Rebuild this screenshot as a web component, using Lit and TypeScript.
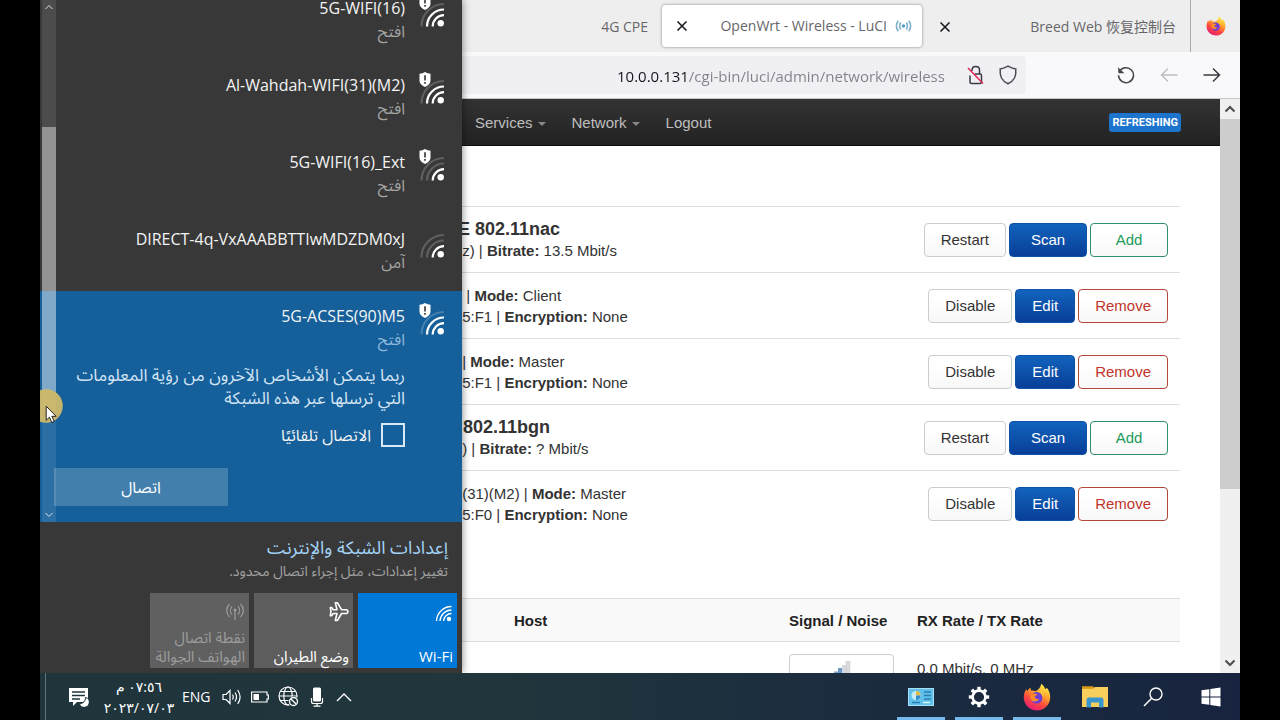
import { LitElement, html, css, svg, nothing } from "lit";
import { customElement, property } from "lit/decorators.js";
import { classMap } from "lit/directives/class-map.js";

interface Network {
  name: string;
  status: string;
  bars: number;
  open: boolean;
}

const networks: Network[] = [
  { name: "5G-WIFI(16)", status: "افتح", bars: 3, open: true },
  { name: "Al-Wahdah-WIFI(31)(M2)", status: "افتح", bars: 3, open: true },
  { name: "5G-WIFI(16)_Ext", status: "افتح", bars: 2, open: true },
  { name: "DIRECT-4q-VxAAABBTTIwMDZDM0xJ", status: "آمن", bars: 2, open: false },
];

const current: Network = { name: "5G-ACSES(90)M5", status: "افتح", bars: 3, open: true };

const firefoxLogo = (size: number) => html`
  <svg width=${size} height=${size} viewBox="0 0 28 28" aria-hidden="true">
    <defs>
      <linearGradient id="ff-body" x1="0.8" y1="0.05" x2="0.3" y2="1">
        <stop offset="0" stop-color="#fff04a" />
        <stop offset="0.35" stop-color="#ffa32c" />
        <stop offset="0.65" stop-color="#ff4a3d" />
        <stop offset="1" stop-color="#e31a77" />
      </linearGradient>
    </defs>
    <path
      fill="url(#ff-body)"
      d="M18.2 0.8c2.2 1.4 3.4 3.5 3.8 5 .8.3 1.600-.3 1.800-1 1.900 2.200 3.400 5.300 3.400 9.400C27.200 21.600 21.400 27.400 14 27.400S.8 21.700.8 14.400c0-3.600 1-6.300 2.600-8.400.2 1 .5 1.700 1 2.200C5 6.700 6.300 5.300 7.700 4.700c-.2 1-.1 2 .3 2.900 1.300-.4 3.300-.2 4.800.6 2.700-1.500 5-4 5.400-7.400z"
    />
    <circle cx="13.600" cy="14.800" r="5.800" fill="#6b3fd6" />
    <path d="M8 11.500c2.500-1.600 5.200-1 6.800.6-1.500.2-2.900 1-3 2-.1 1.500 2 2.300 4.300 1.600-1 3-5.600 3.700-7.800 1.200-1.600-1.800-1.300-4-.3-5.400z" fill="#ff8a2a" />
    <path d="M14.500 9c3-.6 5.600 1.800 5.500 5.400 1.400-2.600.8-6-1.400-8-1.200 1.300-2.700 2-4.100 2.600z" fill="#ffc83a" />
  </svg>
`;

const closeIcon = html`
  <svg width="12" height="12" viewBox="0 0 12 12" aria-hidden="true">
    <path d="M1.500 1.500l9 9M10.500 1.500l-9 9" stroke="#15141a" stroke-width="1.500" fill="none" />
  </svg>
`;

@customElement("signal-icon")
export class SignalIcon extends LitElement {
  @property({ type: Number }) bars = 3;
  @property({ type: Boolean }) open = false;

  static styles = css`
    :host { display: block; width: 26px; height: 32px; color: #fff; }
    svg { display: block; }
    .dim { opacity: 0.2; }
  `;

  render() {
    const arcs = [
      { level: 2, d: "M13.700 31.500A11.300 11.300 0 0 1 25 20.200" },
      { level: 3, d: "M8 31.500A17 17 0 0 1 25 14.500" },
      { level: 4, d: "M2.500 31.500A22.500 22.500 0 0 1 25 9" },
    ];
    return html`
      <svg width="26" height="32" viewBox="0 0 26 32" aria-hidden="true">
        ${arcs.map(
          (a) => svg`<path class=${classMap({ dim: a.level > this.bars })} d=${a.d}
            fill="none" stroke="currentColor" stroke-width="2.200" />`,
        )}
        <circle cx="21.700" cy="28.300" r="3.200" fill="currentColor" />
        ${this.open
          ? svg`<path d="M0.500 1.800Q3.500 1.600 6 0Q8.500 1.600 11.500 1.800V9Q11.200 12.500 6 15Q0.800 12.500 0.500 9Z" fill="currentColor" />
              <path d="M6 3.200V8.400M6 10V11.700" stroke="#333" stroke-width="1.600" />`
          : nothing}
      </svg>
    `;
  }
}

@customElement("wifi-flyout")
export class WifiFlyout extends LitElement {
  static styles = css`
    :host {
      display: flex;
      flex-direction: column;
      position: relative;
      z-index: 1;
      width: 422px;
      flex: none;
      background: #383838;
      color: #f4f4f4;
      font: 16px/23px "Open Sans", "Noto Sans Arabic", "DejaVu Sans", sans-serif;
      box-shadow: 0 0 8px rgba(0, 0, 0, 0.5);
      direction: rtl;
      box-sizing: border-box;
    }
    .list {
      flex: 1;
      min-height: 0;
      margin: 0;
      padding: 0;
      list-style: none;
      overflow: hidden;
      display: flex;
      flex-direction: column;
      justify-content: flex-end;
    }
    .item {
      flex: none;
      display: flex;
      gap: 14px;
      padding: 12px 17px 17px 14px;
    }
    .info { flex: 1; min-width: 0; padding-top: 2px; }
    .name { display: block; direction: ltr; text-align: right; }
    .status { display: block; color: #a4a4a4; }
    .selected { background: #155f9b; padding-bottom: 16px; }
    .selected .status { color: #8fb9dc; }
    .warning { margin: 12px 0 14px; color: #d3e4f3; font-size: 17px; white-space: nowrap; }
    .auto { display: flex; align-items: center; gap: 10px; }
    .box {
      appearance: none;
      width: 24px;
      height: 24px;
      margin: 0;
      border: 2px solid #d8e8f5;
    }
    .connect {
      display: block;
      width: 174px;
      height: 38px;
      margin: 21px auto 0 0;
      border: 0;
      background: #437fad;
      color: #fff;
      font: inherit;
    }
    .footer { padding: 13px 5px 5px; }
    .settings {
      display: block;
      padding: 0 9px;
      color: #a3d3f7;
      text-decoration: none;
      font-size: 18px;
      line-height: 24px;
    }
    .hint { margin: 0 0 11px; padding: 0 9px; color: #a2a2a2; font-size: 14px; }
    .tiles { display: flex; gap: 5px; }
    .tile {
      width: 99px;
      height: 75px;
      padding: 4px 4px 2px;
      border: 0;
      display: flex;
      flex-direction: column;
      justify-content: space-between;
      align-items: flex-start;
      background: #5d5d5d;
      color: #fff;
      font: inherit;
      font-size: 15px;
      line-height: 19px;
      text-align: right;
      white-space: nowrap;
    }
    .tile.on { background: #0078d7; }
    .tile.off { color: #9c9c9c; background: #606060; }
    .track {
      position: absolute;
      top: 0;
      left: 2px;
      width: 14px;
      height: 522px;
      background: rgba(255, 255, 255, 0.1);
      display: flex;
      flex-direction: column;
      align-items: center;
      justify-content: space-between;
      padding: 4px 0;
      box-sizing: border-box;
    }
    .thumb {
      position: absolute;
      top: 127px;
      left: 0;
      width: 14px;
      height: 284px;
      background: rgba(255, 255, 255, 0.4);
    }
    .pointer { position: absolute; left: 0; top: 388px; }
  `;

  private details(n: Network) {
    return html`
      <span class="name">${n.name}</span>
      <span class="status">${n.status}</span>
    `;
  }

  render() {
    return html`
      <ul class="list">
        ${networks.map(
          (n) => html`
            <li class="item">
              <signal-icon .bars=${n.bars} .open=${n.open}></signal-icon>
              <div class="info">${this.details(n)}</div>
            </li>
          `,
        )}
        <li class="item selected">
          <signal-icon .bars=${current.bars} .open=${current.open}></signal-icon>
          <div class="info">
            ${this.details(current)}
            <p class="warning">
              ربما يتمكن الأشخاص الآخرون من رؤية المعلومات<br />التي ترسلها عبر هذه الشبكة
            </p>
            <label class="auto"><input class="box" type="checkbox" />الاتصال تلقائيًا</label>
            <button class="connect" type="button">اتصال</button>
          </div>
        </li>
      </ul>
      <div class="footer">
        <a class="settings" href="#settings">إعدادات الشبكة والإنترنت</a>
        <p class="hint">تغيير إعدادات، مثل إجراء اتصال محدود.</p>
        <div class="tiles">
          <button class="tile on" type="button">
            <svg width="18" height="26" viewBox="0 0 18 26" aria-hidden="true">
              <g fill="none" stroke="#fff" stroke-width="1.300">
                <path d="M1.500 24A15 15 0 0 1 16.500 9.500" />
                <path d="M5 24A11.500 11.500 0 0 1 16.500 13" />
                <path d="M8.500 24A8 8 0 0 1 16.500 16.500" />
              </g>
              <circle cx="14" cy="22" r="2.200" fill="#fff" />
            </svg>
            <span>Wi-Fi</span>
          </button>
          <button class="tile" type="button">
            <svg width="20" height="26" viewBox="0 0 20 26" aria-hidden="true">
              <path
                fill="none"
                stroke="#fff"
                stroke-width="1.600"
                stroke-linejoin="round"
                d="M17.500 12.700H12.500L8.500 5.800H6.300L8 12.700H4.300L2.800 10.600H1.300L2 14.600L1.300 18.600H2.800L4.300 16.500H8L6.300 23.400H8.500L12.500 16.500H17.500Q19 16 19 14.600Q19 13.200 17.500 12.700Z"
              />
            </svg>
            <span>وضع الطيران</span>
          </button>
          <button class="tile off" type="button">
            <svg width="20" height="24" viewBox="0 0 20 24" aria-hidden="true">
              <g fill="none" stroke="currentColor" stroke-width="1.200">
                <path d="M4.500 7a9 9 0 0 0 0 13M7 9.500a6 6 0 0 0 0 8M15.500 7a9 9 0 0 1 0 13M13 9.500a6 6 0 0 1 0 8M10 13.500V23" />
              </g>
              <circle cx="10" cy="13" r="1.500" fill="currentColor" />
            </svg>
            <span>نقطة اتصال<br />الهواتف الجوالة</span>
          </button>
        </div>
      </div>
      <div class="track">
        <svg width="8" height="6" viewBox="0 0 8 6"><path d="M0.500 5L4 1.500L7.500 5" fill="none" stroke="#ddd" /></svg>
        <svg width="8" height="6" viewBox="0 0 8 6"><path d="M0.500 1L4 4.500L7.500 1" fill="none" stroke="#ddd" /></svg>
        <div class="thumb"></div>
      </div>
      <svg class="pointer" width="24" height="36" viewBox="0 0 24 36" aria-hidden="true">
        <circle cx="6" cy="18" r="16.800" fill="#cdb86a" fill-opacity="0.950" />
        <path d="M6.200 18.200V32.300L9.400 29.200L11.800 34.500L14.200 33.500L11.900 28.300H16.200Z" fill="#fff" stroke="#111" stroke-width="0.900" />
      </svg>
    `;
  }
}

interface Entry {
  title?: string;
  lines: [string, string, string][];
}

// Long interface descriptions run on under the flyout at their left end.
const entries: Entry[] = [
  { title: "E 802.11nac", lines: [[" z) | ", "Bitrate:", " 13.5 Mbit/s"]] },
  { lines: [["  | ", "Mode:", " Client"], [":5:F1 | ", "Encryption:", " None"]] },
  { lines: [[" | ", "Mode:", " Master"], [":5:F1 | ", "Encryption:", " None"]] },
  { title: " 802.11bgn", lines: [[" ) | ", "Bitrate:", " ? Mbit/s"]] },
  { lines: [[" (31)(M2) | ", "Mode:", " Master"], [":5:F0 | ", "Encryption:", " None"]] },
];

@customElement("browser-window")
export class BrowserWindow extends LitElement {
  static styles = css`
    :host {
      flex: 1;
      min-width: 0;
      display: flex;
      flex-direction: column;
      background: #fff;
      font: 14px/20px "Open Sans", "Noto Sans CJK SC", sans-serif;
      color: #66666a;
    }
    svg { display: block; flex: none; }
    button { font: inherit; color: inherit; }
    .icon { border: 0; padding: 0; background: none; display: block; }
    .tabs {
      display: flex;
      justify-content: flex-end;
      align-items: stretch;
      height: 52px;
      flex: none;
      background: #eeeeee;
      white-space: nowrap;
    }
    .tab { display: flex; align-items: center; padding: 2px 14px 0; }
    .active {
      width: 260px;
      box-sizing: border-box;
      margin: 5px 0;
      padding: 0 10px 0 14px;
      background: #fff;
      border-radius: 4px;
      box-shadow: 0 0 3px rgba(0, 0, 0, 0.45);
    }
    .spread { justify-content: space-between; }
    .title { display: flex; align-items: center; gap: 8px; }
    .last { width: 269px; box-sizing: border-box; padding-left: 17px; border-right: 1px solid #aaa; }
    .pinned { width: 49px; display: grid; place-items: center; }
    .toolbar {
      display: flex;
      align-items: center;
      height: 47px;
      flex: none;
      box-sizing: border-box;
      padding-right: 19px;
      background: #f9f9fb;
      border-bottom: 1px solid #c9c9cc;
    }
    .address {
      flex: 1;
      display: flex;
      align-items: center;
      gap: 14px;
      height: 38px;
      padding-right: 8px;
      background: #f0f0f4;
      border-radius: 0 4px 4px 0;
    }
    .url {
      width: 336px;
      margin-left: auto;
      padding: 2px 0 0;
      border: 0;
      outline: 0;
      font: 15px/24px "Open Sans", sans-serif;
      color: transparent;
      background: linear-gradient(90deg, #15141a 72px, #808086 72px);
      -webkit-background-clip: text;
      background-clip: text;
    }
    .nav-buttons { display: flex; align-items: center; gap: 25px; padding-left: 91px; }
    .view { flex: 1; min-height: 0; display: flex; }
    .page {
      flex: 1;
      min-width: 0;
      overflow: hidden;
      margin-left: -4px;
      font: 15px/21px "Liberation Sans", Arial, sans-serif;
      color: #333;
    }
    .menu {
      display: flex;
      align-items: center;
      gap: 26px;
      height: 47px;
      box-sizing: border-box;
      padding: 0 39px 0 17px;
      background: linear-gradient(#333, #222);
      border-bottom: 1px solid #0c0c0c;
    }
    .menu a { color: #bfbfbf; text-decoration: none; display: flex; align-items: center; gap: 5px; }
    .caret { border: 4px solid transparent; border-top-color: #888; border-bottom: 0; margin-top: 3px; }
    .badge {
      margin-left: auto;
      padding: 0 3px;
      border-radius: 3px;
      background: #1d74cc;
      color: #fff;
      font: bold 11px/19px Roboto, "Liberation Sans", sans-serif;
    }
    .radios, .stations { padding-right: 40px; }
    .radios { padding-top: 60px; }
    .row {
      display: flex;
      align-items: center;
      justify-content: space-between;
      height: 66px;
      box-sizing: border-box;
      padding-right: 12px;
      border-top: 1px solid #ddd;
      white-space: pre;
    }
    .heading { margin: 0; font-size: 18px; line-height: 22px; }
    .line { margin: 0; }
    .actions { display: flex; gap: 3px; }
    .btn {
      height: 34px;
      padding: 0 16px;
      border: 1px solid #ccc;
      border-radius: 4px;
      background: linear-gradient(#fff, #fff 25%, #f8f8f8);
    }
    .wide { min-width: 78px; }
    .primary { background: linear-gradient(#1263bd, #083f98); border-color: #0d51a8; color: #fff; }
    .positive { border-color: #2f8f66; color: #1f9a5c; }
    .negative { border-color: #b5463c; color: #c0352b; }
    .stations { padding-top: 62px; }
    table { width: 100%; border-collapse: collapse; }
    th { height: 42px; padding: 0; text-align: left; background: #f9f9f9; color: #222; }
    tr { border-top: 1px solid #ddd; }
    td { padding: 12px 0 0; vertical-align: top; }
    .host { padding-left: 56px; }
    .signal { width: 128px; }
    .rate { width: 263px; }
    td.rate { padding-top: 16px; }
    .meter {
      display: flex;
      justify-content: center;
      width: 105px;
      height: 40px;
      box-sizing: border-box;
      padding-top: 6px;
      border: 1px solid #ccc;
      border-radius: 4px;
    }
    .scroll {
      width: 20px;
      flex: none;
      display: flex;
      flex-direction: column;
      align-items: center;
      background: #f0f0f0;
    }
    .scroll svg { margin: 5px 0; }
    .handle { width: 100%; flex: 0 1 370px; background: #cdcdcd; }
    .scroll svg:last-child { margin-top: auto; }
  `;

  private actions(radio: boolean) {
    return radio
      ? html`<button class="btn" type="button">Restart</button
          ><button class="btn wide primary" type="button">Scan</button
          ><button class="btn wide positive" type="button">Add</button>`
      : html`<button class="btn" type="button">Disable</button
          ><button class="btn primary" type="button">Edit</button
          ><button class="btn negative" type="button">Remove</button>`;
  }

  private entry(e: Entry) {
    return html`<div class="row"><div>${e.title ? html`<h3 class="heading">${e.title}</h3>` : nothing}${e.lines.map(
      ([lead, label, value]) => html`<p class="line">${lead}<b>${label}</b>${value}</p>`,
    )}</div><div class="actions">${this.actions(!!e.title)}</div></div>`;
  }

  render() {
    return html`
      <div class="tabs">
        <div class="tab">4G CPE</div>
        <div class="tab active spread">
          <button class="icon" type="button" aria-label="Close">${closeIcon}</button>
          <span class="title">
            OpenWrt - Wireless - LuCI
            <svg width="17" height="12" viewBox="0 0 17 12" aria-hidden="true">
              <circle cx="8.500" cy="6" r="1.800" fill="#5c9fc4" />
              <path d="M3.200 0.800Q-0.400 6 3.200 11.200M5.700 2.500Q3.500 6 5.700 9.500M13.800 0.800Q17.400 6 13.800 11.200M11.300 2.500Q13.500 6 11.300 9.500" fill="none" stroke="#7fb0cc" stroke-width="1.600" />
            </svg>
          </span>
        </div>
        <div class="tab last spread">
          <button class="icon" type="button" aria-label="Close">${closeIcon}</button>
          <span>Breed Web 恢复控制台</span>
        </div>
        <div class="pinned">${firefoxLogo(20)}</div>
      </div>
      <div class="toolbar">
        <div class="address">
          <input class="url" type="text" aria-label="Address" value="10.0.0.131/cgi-bin/luci/admin/network/wireless" />
          <svg width="17" height="20" viewBox="0 0 17 20" aria-hidden="true">
            <g fill="none" stroke="#3b3a42" stroke-width="1.500">
              <path d="M3 10.500V17Q3 18.500 4.500 18.500H13Q14.500 18.500 14.500 17V10.500Q14.500 9 13 9H8" />
              <path d="M5 6V5Q5 1.500 8.800 1.500Q12.500 1.500 12.500 5V9" />
            </g>
            <path d="M1 3L16 18.500" stroke="#e22850" stroke-width="1.500" />
          </svg>
          <svg width="20" height="20" viewBox="0 0 20 20" aria-hidden="true">
            <path d="M10 1.200Q13.500 3.300 17.800 4Q18.300 9 16.500 13Q14.500 16.700 10 18.800Q5.500 16.700 3.500 13Q1.700 9 2.200 4Q6.500 3.300 10 1.200Z" fill="none" stroke="#4b4a52" stroke-width="1.500" />
          </svg>
        </div>
        <div class="nav-buttons">
          <button class="icon" type="button" aria-label="Reload">
            <svg width="18" height="18" viewBox="0 0 18 18">
              <path d="M2.200 6A7.500 7.500 0 1 1 1.500 9.300" fill="none" stroke="#45444c" stroke-width="1.500" />
              <path d="M1 1.200L1.500 7.200H7.400Z" fill="#45444c" />
            </svg>
          </button>
          <button class="icon" type="button" aria-label="Forward">
            <svg width="18" height="16" viewBox="0 0 18 16"><path d="M17.500 8H1.500M8 1.500L1.500 8L8 14.500" fill="none" stroke="#bdbdc2" stroke-width="1.400" /></svg>
          </button>
          <button class="icon" type="button" aria-label="Back">
            <svg width="18" height="16" viewBox="0 0 18 16"><path d="M0.500 8H16.500M10 1.500L16.500 8L10 14.500" fill="none" stroke="#3b3a42" stroke-width="1.500" /></svg>
          </button>
        </div>
      </div>
      <div class="view">
        <div class="page">
          <nav class="menu">
            <a href="#services">Services<i class="caret"></i></a>
            <a href="#network">Network<i class="caret"></i></a>
            <a href="#logout">Logout</a>
            <span class="badge">REFRESHING</span>
          </nav>
          <div class="radios">${entries.map((e) => this.entry(e))}</div>
          <div class="stations">
            <table>
              <thead>
                <tr>
                  <th class="host">Host</th>
                  <th class="signal">Signal / Noise</th>
                  <th class="rate">RX Rate / TX Rate</th>
                </tr>
              </thead>
              <tbody>
                <tr>
                  <td></td>
                  <td class="signal">
                    <div class="meter">
                      <svg width="18" height="18" viewBox="0 0 18 18" aria-hidden="true">
                        <rect x="1" y="10.500" width="4" height="7" fill="#7fa3cf" />
                        <rect x="5" y="7" width="4" height="10" fill="#6f97c8" />
                        <rect x="9" y="4" width="4" height="13" fill="#d5d9de" />
                        <rect x="13" y="0.500" width="4" height="17" fill="#d9d9d9" stroke="#c6c6c6" stroke-width="0.500" />
                      </svg>
                    </div>
                  </td>
                  <td class="rate">0.0 Mbit/s, 0 MHz</td>
                </tr>
              </tbody>
            </table>
          </div>
        </div>
        <div class="scroll" aria-hidden="true">
          <svg width="12" height="10" viewBox="0 0 12 10"><path d="M1.500 7.500L6 3L10.500 7.500" fill="none" stroke="#505050" stroke-width="2.200" /></svg>
          <div class="handle"></div>
          <svg width="12" height="10" viewBox="0 0 12 10"><path d="M1.500 2.500L6 7L10.500 2.500" fill="none" stroke="#505050" stroke-width="2.200" /></svg>
        </div>
      </div>
    `;
  }
}

@customElement("task-bar")
export class TaskBar extends LitElement {
  static styles = css`
    :host {
      position: relative;
      z-index: 2;
      flex: none;
      height: 47px;
      display: flex;
      justify-content: space-between;
      background: linear-gradient(90deg, #20353b, #20363c 38%, #1b2c3f 68%, #18243f);
      color: #fff;
      font: 14px/20px "Open Sans", "DejaVu Sans", sans-serif;
    }
    svg { display: block; }
    .tray { display: flex; align-items: center; margin-left: 5px; border-left: 1px solid #61757a; padding-left: 22px; }
    .tray button, .app { border: 0; padding: 0; background: none; color: inherit; font: inherit; }
    .tray .clock { width: 86px; margin: 0 0 0 7px; text-align: center; direction: rtl; line-height: 21px; }
    .tray .lang { margin-right: 11px; }
    .icons { display: flex; align-items: center; gap: 9px; }
    .apps { display: flex; }
    .app { width: 58px; display: grid; place-items: center; }
    .running { background: linear-gradient(#76b9ed, #76b9ed) bottom / 48px 3px no-repeat; }
  `;

  render() {
    return html`
      <div class="tray">
        <button type="button" aria-label="Notifications">
          <svg width="21" height="20" viewBox="0 0 21 20">
            <path d="M1 1H20V15H9L5 19V15H1Z" fill="#fff" />
            <path d="M4 5H17M4 8.500H17M4 12H12" stroke="#20353b" stroke-width="1.300" />
            <path d="M17.500 10.500A5 5 0 1 1 11.500 16.500A5.500 5.500 0 0 0 17.500 10.500Z" fill="#fff" stroke="#20353b" />
          </svg>
        </button>
        <button class="clock" type="button">٠٧:٥٦ م<br />٢٠٢٣/٠٧/٠٣</button>
        <button class="lang" type="button">ENG</button>
        <div class="icons">
          <svg width="20" height="18" viewBox="0 0 20 18">
            <path d="M1 6.500H4L8 2.500V15.500L4 11.500H1Z" fill="none" stroke="#fff" stroke-width="1.200" />
            <path d="M10.500 6.500Q12 9 10.500 11.500M13 4.500Q16 9 13 13.500M15.700 2Q20.500 9 15.700 16" fill="none" stroke="#fff" stroke-width="1.200" />
          </svg>
          <svg width="18" height="12" viewBox="0 0 18 12">
            <path d="M0.600 1H16V4H17.400V8H16V11H0.600Z" fill="none" stroke="#fff" stroke-width="1.200" />
            <path d="M2.500 3H8V9H2.500Z" fill="#fff" />
          </svg>
          <svg width="21" height="21" viewBox="0 0 21 21">
            <g fill="none" stroke="#fff" stroke-width="1.200">
              <circle cx="10" cy="10" r="9" />
              <ellipse cx="10" cy="10" rx="4.200" ry="9" />
              <path d="M1 10H19M2.500 5.500H17.500M2.500 14.500H12" />
            </g>
            <circle cx="15.500" cy="15.500" r="5.200" fill="#20353b" />
            <circle cx="15.500" cy="15.500" r="4" fill="none" stroke="#fff" stroke-width="1.300" />
            <path d="M12.700 12.700L18.300 18.300" stroke="#fff" stroke-width="1.300" />
          </svg>
          <svg width="18" height="20" viewBox="0 0 18 20">
            <rect x="5" y="0.500" width="8" height="14" rx="1.500" fill="#fff" />
            <path d="M3.500 11V14.500Q3.500 16.500 5.500 16.500H12.500Q14.500 16.500 14.500 14.500V11M9 16.500V19M5.500 19.200H12.500" fill="none" stroke="#fff" stroke-width="1.200" />
          </svg>
          <svg width="18" height="12" viewBox="0 0 18 12"><path d="M2 10L9 3L16 10" fill="none" stroke="#fff" stroke-width="1.400" /></svg>
        </div>
      </div>
      <div class="apps">
        <button class="app running" type="button" aria-label="Control Panel">
          <svg width="26" height="18" viewBox="0 0 26 18">
            <rect x="0.500" y="0.500" width="25" height="17" fill="#5fc0ea" stroke="#a7e0f7" />
            <circle cx="8" cy="7.500" r="4.500" fill="#c9ecf9" />
            <path d="M8 7.500V3A4.500 4.500 0 0 1 12.500 7.500Z" fill="#e7b640" />
            <path d="M8 7.500H12.500A4.500 4.500 0 0 1 8 12Z" fill="#2f8cc6" />
            <path d="M16 4H23M16 7.500H23M16 11H23M4 14.500H12" stroke="#2a7eb0" stroke-width="1.300" />
            <path d="M15 14.500H22" stroke="#e9f7fc" stroke-width="1.300" />
          </svg>
        </button>
        <button class="app running" type="button" aria-label="Settings">
          <svg width="22" height="22" viewBox="0 0 22 22">
            <circle cx="11" cy="11" r="6.400" fill="none" stroke="#fff" stroke-width="2.600" />
            <g stroke="#fff" stroke-width="3.400">
              ${[0, 45, 90, 135, 180, 225, 270, 315].map(
                (a) => svg`<path d="M11 4V0.800" transform="rotate(${a} 11 11)" />`,
              )}
            </g>
          </svg>
        </button>
        <button class="app running" type="button" aria-label="Firefox">${firefoxLogo(28)}</button>
        <button class="app" type="button" aria-label="File Explorer">
          <svg width="28" height="24" viewBox="0 0 28 24">
            <path d="M1 1.500H11L13 4H1Z" fill="#e0a51c" />
            <path d="M1 3.500H12L14 2H27V22H1Z" fill="#f8cf5c" />
            <path d="M1 3.800H11.500L13 2.500V1.500H1Z" fill="#d9980f" />
            <path d="M5.500 22.500V15Q5.500 12.500 8 12.500H20Q22.500 12.500 22.500 15V22.500H18V17.500H10V22.500Z" fill="#3a95cf" />
          </svg>
        </button>
        <button class="app" type="button" aria-label="Search">
          <svg width="22" height="22" viewBox="0 0 22 22">
            <circle cx="14" cy="8" r="6" fill="none" stroke="#fff" stroke-width="1.400" />
            <path d="M9.700 12.300L2 20" stroke="#fff" stroke-width="1.500" />
          </svg>
        </button>
        <button class="app" type="button" aria-label="Start">
          <svg width="20" height="20" viewBox="0 0 20 20">
            <path d="M0.500 3.300L8.300 2.200V9.500H0.500ZM9.300 2L19.500 0.500V9.500H9.300ZM0.500 10.500H8.300V17.800L0.500 16.700ZM9.300 10.500H19.500V19.500L9.300 18Z" fill="#fff" />
          </svg>
        </button>
      </div>
    `;
  }
}

@customElement("app-root")
export class AppRoot extends LitElement {
  static styles = css`
    :host {
      display: flex;
      flex-direction: column;
      height: 100vh;
      box-sizing: border-box;
      padding: 0 40px;
      background: #000;
      overflow: hidden;
    }
    .desktop { flex: 1; min-height: 0; display: flex; }
  `;

  render() {
    return html`
      <div class="desktop">
        <wifi-flyout></wifi-flyout>
        <browser-window></browser-window>
      </div>
      <task-bar></task-bar>
    `;
  }
}
